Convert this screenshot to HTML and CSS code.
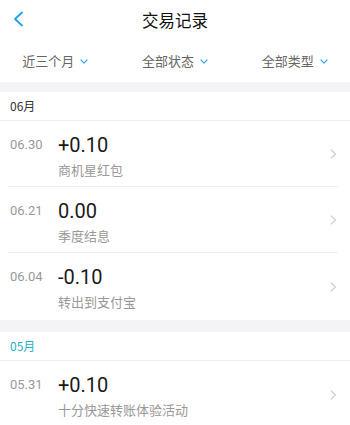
FILE: index.html
```html
<!DOCTYPE html>
<html lang="zh-CN">
<head>
<meta charset="utf-8">
<link rel="stylesheet" href="styles.css">
</head>
<body>
<div class="page">
  <header class="topbar">
    <svg class="back" width="12" height="16" viewBox="0 0 12 16"><path d="M10 1.5 L3 8 L10 14.5" fill="none" stroke="#1f9ff0" stroke-width="1.8" stroke-linecap="round" stroke-linejoin="round"/></svg>
    <div class="title">交易记录</div>
  </header>
  <nav class="filters">
    <div class="filter">近三个月<svg class="caret" width="8" height="5" viewBox="0 0 8 5"><path d="M1 1 L4 4 L7 1" fill="none" stroke="#3bb0f0" stroke-width="1.2" stroke-linecap="round" stroke-linejoin="round"/></svg></div>
    <div class="filter">全部状态<svg class="caret" width="8" height="5" viewBox="0 0 8 5"><path d="M1 1 L4 4 L7 1" fill="none" stroke="#3bb0f0" stroke-width="1.2" stroke-linecap="round" stroke-linejoin="round"/></svg></div>
    <div class="filter">全部类型<svg class="caret" width="8" height="5" viewBox="0 0 8 5"><path d="M1 1 L4 4 L7 1" fill="none" stroke="#3bb0f0" stroke-width="1.2" stroke-linecap="round" stroke-linejoin="round"/></svg></div>
  </nav>

  <section class="group">
    <div class="month">06月</div>
    <div class="row">
      <div class="date">06.30</div>
      <div class="info"><div class="amount">+0.10</div><div class="desc">商机星红包</div></div>
      <svg class="arrow" width="7" height="10" viewBox="0 0 7 10"><path d="M1.2 1 L5.5 5 L1.2 9" fill="none" stroke="#cfcfcf" stroke-width="1.2" stroke-linecap="round" stroke-linejoin="round"/></svg>
    </div>
    <div class="row">
      <div class="date">06.21</div>
      <div class="info"><div class="amount">0.00</div><div class="desc">季度结息</div></div>
      <svg class="arrow" width="7" height="10" viewBox="0 0 7 10"><path d="M1.2 1 L5.5 5 L1.2 9" fill="none" stroke="#cfcfcf" stroke-width="1.2" stroke-linecap="round" stroke-linejoin="round"/></svg>
    </div>
    <div class="row">
      <div class="date">06.04</div>
      <div class="info"><div class="amount">-0.10</div><div class="desc">转出到支付宝</div></div>
      <svg class="arrow" width="7" height="10" viewBox="0 0 7 10"><path d="M1.2 1 L5.5 5 L1.2 9" fill="none" stroke="#cfcfcf" stroke-width="1.2" stroke-linecap="round" stroke-linejoin="round"/></svg>
    </div>
  </section>

  <section class="group group-second">
    <div class="month month-current">05月</div>
    <div class="row">
      <div class="date">05.31</div>
      <div class="info"><div class="amount">+0.10</div><div class="desc">十分快速转账体验活动</div></div>
      <svg class="arrow" width="7" height="10" viewBox="0 0 7 10"><path d="M1.2 1 L5.5 5 L1.2 9" fill="none" stroke="#cfcfcf" stroke-width="1.2" stroke-linecap="round" stroke-linejoin="round"/></svg>
    </div>
  </section>
</div>
</body>
</html>
```
FILE: styles.css
```css
* { box-sizing: border-box; }
html, body { margin: 0; padding: 0; }
body {
  background: #f4f4f7;
  font-family: Roboto, "Noto Sans CJK SC", sans-serif;
  color: #222;
  width: 350px;
  height: 425px;
  overflow: hidden;
}
.page { display: flex; flex-direction: column; }
.topbar {
  position: relative;
  height: 40px;
  background: #fff;
  display: flex;
  align-items: center;
  justify-content: center;
}
.back { position: absolute; left: 12px; top: 11px; }
.title {
  font-family: "Noto Sans CJK SC", sans-serif;
  font-size: 16.5px;
  color: #111;
  line-height: 20px;
}
.filters {
  height: 42px;
  background: #fff;
  display: grid;
  grid-template-columns: 1fr 1fr 1fr;
  align-items: center;
}
.filter {
  display: flex;
  align-items: center;
  justify-content: center;
  gap: 6px;
  font-family: "Noto Sans CJK SC", sans-serif;
  font-size: 13px;
  color: #666;
  line-height: 18px;
}
.filter:first-child { padding-right: 6px; }
.filter:last-child { padding-left: 6px; }
.caret { margin-top: 1px; }
.group { background: #fff; margin-top: 10px; }
.group-second { margin-top: 12px; }
.month {
  height: 29px;
  padding-left: 10px;
  padding-bottom: 1px;
  display: flex;
  align-items: center;
  font-family: "Noto Sans CJK SC", sans-serif;
  font-size: 12px;
  color: #333;
  border-bottom: 1px solid #efefef;
}
.month-current { color: #2ab0c6; }
.row {
  height: 66px;
  display: flex;
  align-items: flex-start;
  padding: 12px 0 0 2px;
  border-bottom: 1px solid #efefef;
  margin-left: 8px;
  margin-right: 12px;
}
.row:last-child { border-bottom: none; height: 67px; }
.date {
  width: 48px;
  font-size: 13px;
  color: #999;
  line-height: 18px;
  padding-top: 3px;
}
.info { flex: 1; display: flex; flex-direction: column; gap: 4px; }
.amount { font-size: 20px; line-height: 24px; color: #1a1a1a; }
.desc {
  font-family: "Noto Sans CJK SC", sans-serif;
  font-size: 13px;
  line-height: 18px;
  color: #999;
}
.arrow { align-self: center; margin-top: -12px; margin-right: 1px; }
```
